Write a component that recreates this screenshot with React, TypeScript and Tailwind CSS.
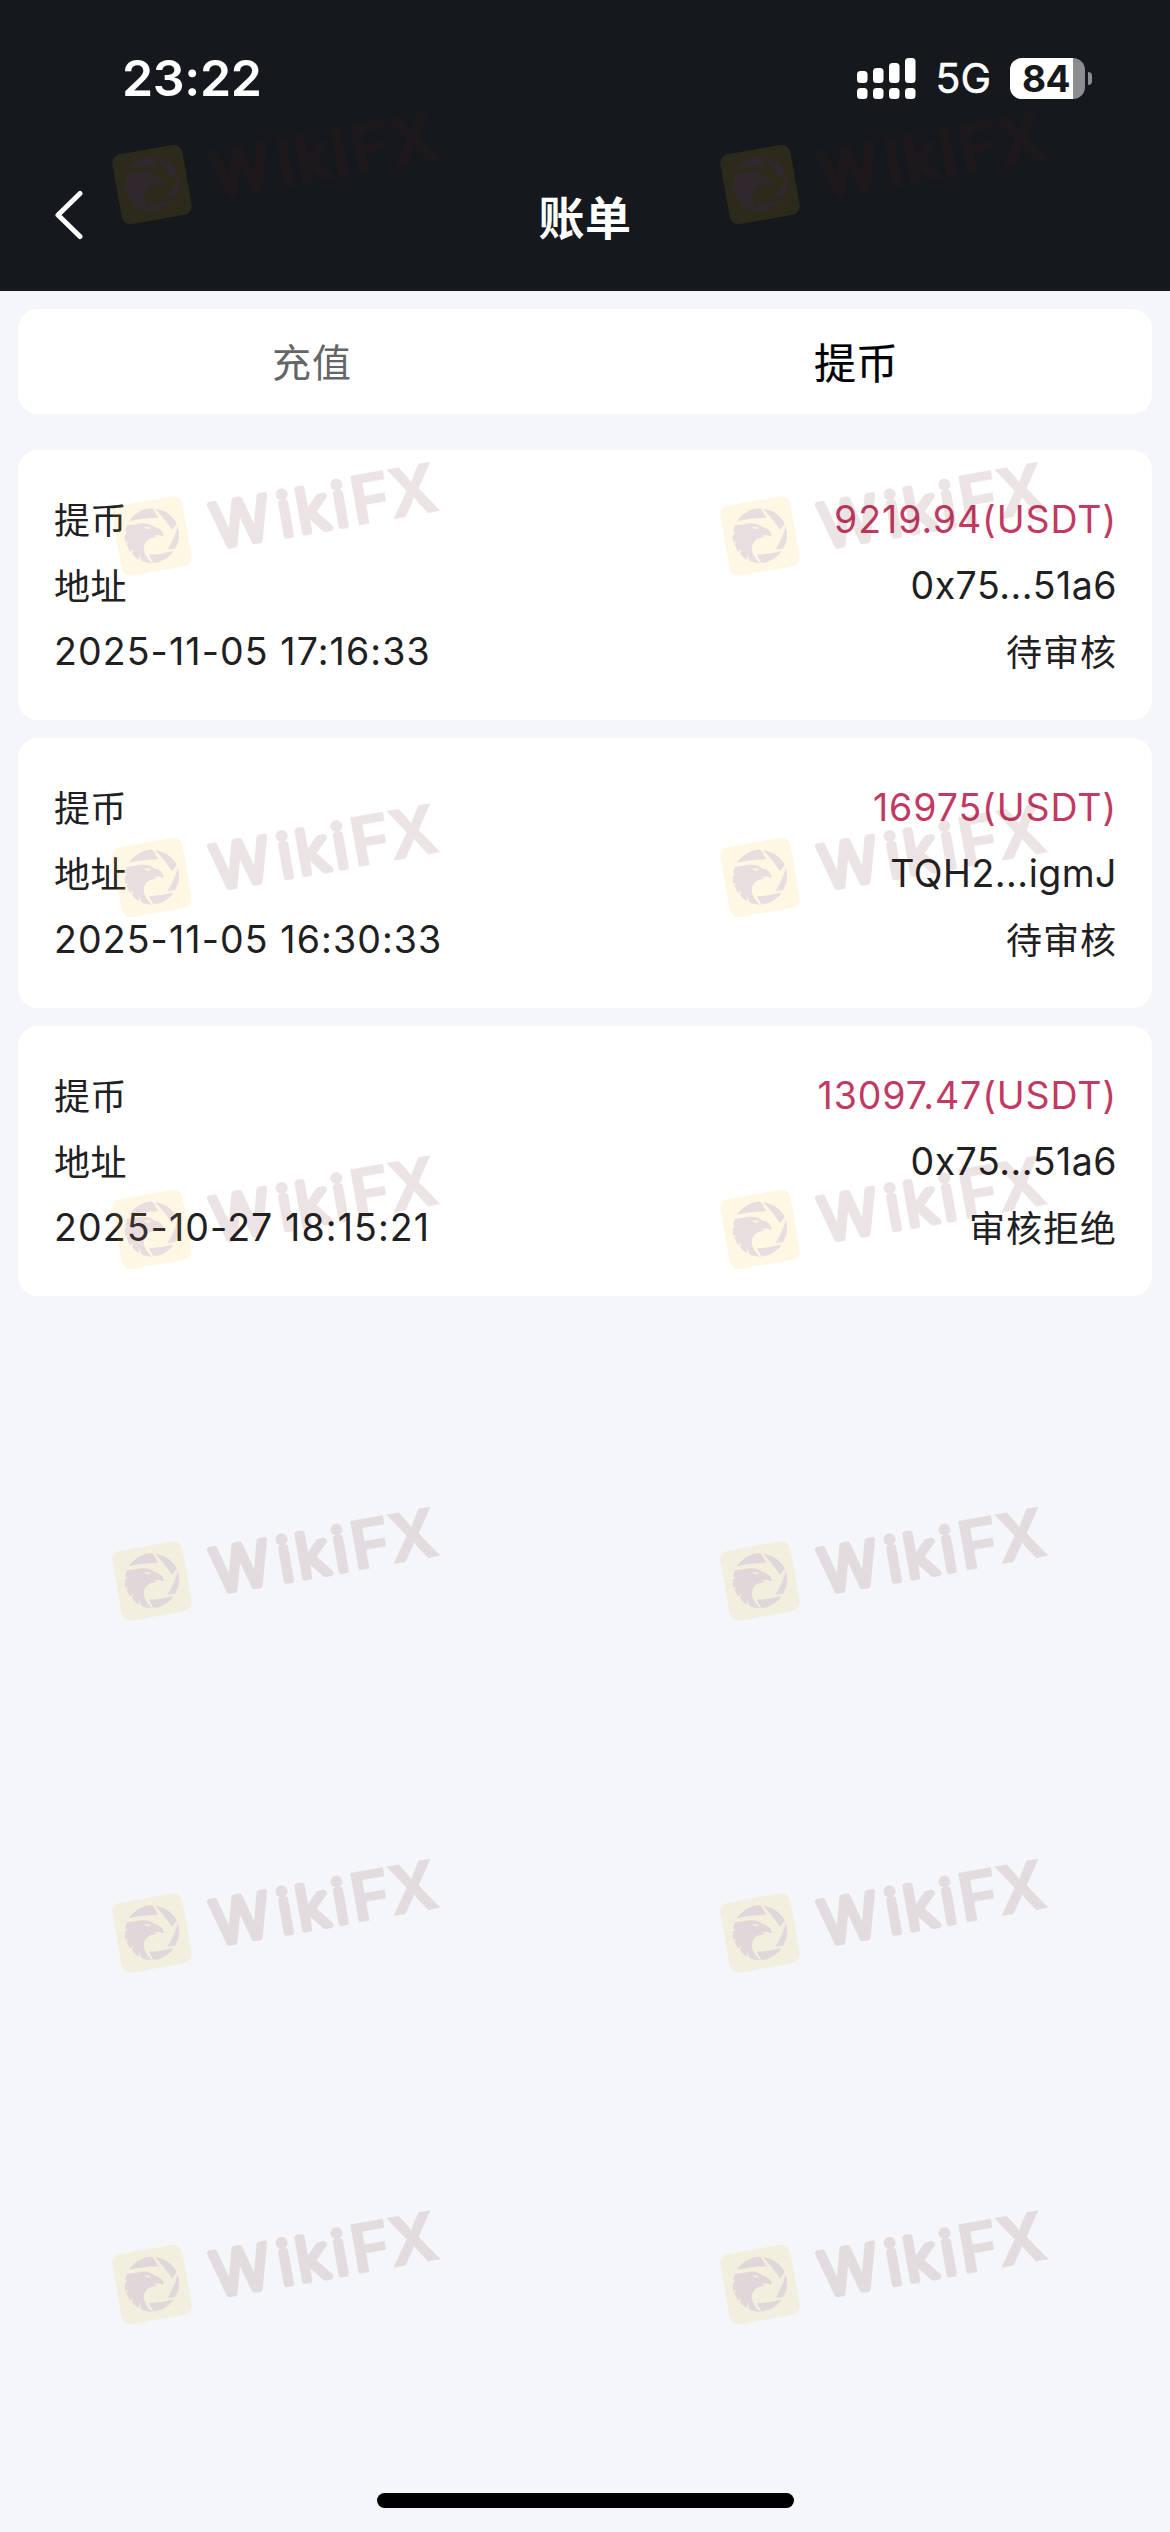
import { useState } from "react"

interface Bill {
  id: number
  amount: string
  address: string
  time: string
  status: string
}

const bills: Bill[] = [
  { id: 1, amount: "9219.94(USDT)", address: "0x75...51a6", time: "2025-11-05 17:16:33", status: "待审核" },
  { id: 2, amount: "16975(USDT)", address: "TQH2...igmJ", time: "2025-11-05 16:30:33", status: "待审核" },
  { id: 3, amount: "13097.47(USDT)", address: "0x75...51a6", time: "2025-10-27 18:15:21", status: "审核拒绝" },
]

const tabs = ["充值", "提币"]

const markRows = [184.5, 536, 877.5, 1229.5, 1581, 1933, 2284.5]
const markCols = [152, 760]

function SignalIcon() {
  return (
    <svg className="h-[41px] w-[60px]" viewBox="0 0 60 41" fill="#fff">
      <rect x="0" y="13" width="10.5" height="12" rx="3.5" />
      <rect x="16" y="10" width="10.5" height="15" rx="3.5" />
      <rect x="32" y="5" width="10.5" height="20" rx="3.5" />
      <rect x="48" y="0" width="10.5" height="25" rx="3.5" />
      <rect x="0" y="30" width="10.5" height="11" rx="3.5" />
      <rect x="16" y="30" width="10.5" height="11" rx="3.5" />
      <rect x="32" y="30" width="10.5" height="11" rx="3.5" />
      <rect x="48" y="30" width="10.5" height="11" rx="3.5" />
    </svg>
  )
}

function Battery() {
  return (
    <div className="flex items-center gap-[3px]">
      <div className="flex h-[41px] w-[75px] items-center rounded-[12px] bg-[#8b8d91]">
        <div className="flex h-full w-[63px] items-center rounded-l-[12px] bg-white pl-[12px] text-[37px] font-bold leading-none tracking-[-0.5px] text-[#15191e]">
          84
        </div>
      </div>
      <div className="h-[13px] w-[4px] rounded-r-full bg-[#8b8d91]" />
    </div>
  )
}

function StatusBar() {
  return (
    <div className="flex h-[156px] items-center justify-between pl-[122px] pr-[78px]">
      <span className="text-[50px] font-semibold leading-none tracking-[-0.3px]">23:22</span>
      <div className="flex items-center">
        <SignalIcon />
        <span className="ml-[18px] mr-[19px] text-[41px] leading-none [-webkit-text-stroke:0.5px_#fff]">5G</span>
        <Battery />
      </div>
    </div>
  )
}

function Mark() {
  return (
    <>
      <rect x="-35.500" y="-35.500" width="71" height="71" rx="9" fill="#f0b400" opacity="0.11" />
      <g opacity="0.11" fill="#5020c0" transform="rotate(10) scale(0.3333) translate(-156 -183)">
        {/* shutter blades around the eagle */}
        <path d="M87 139 A82 82 0 0 1 158 100 L175 128 Q130 128 87 139Z" />
        <path d="M164 101 A82 82 0 0 1 230 146 L216 164 Q193 128 164 101Z" />
        <path d="M233 153 A82 82 0 0 1 225 221 L203 223 Q224 190 233 153Z" />
        <path d="M147 239 Q186 238 221 228 A82 82 0 0 1 160 264Z" />
        <path
          fillRule="evenodd"
          d="M81 151 Q104 149 124 145 Q150 143 162 156 Q184 158 192 180 L187 184 Q176 177 161 182 L170 187 Q150 188 140 198 Q129 210 132 227 Q137 247 157 265 Q136 264 124 257 L118 236 L117 254 Q102 246 97 237 L99 222 L90 230 Q83 219 80 208 L86 198 L76 203 Q73 190 75 180 L82 172 L76 171 Q77 160 81 151Z M132 157 Q142 166 154 159 Q144 154 132 157Z"
        />
      </g>
      <g
        opacity="0.11"
        fill="#5c1814"
        stroke="#5c1814"
        strokeLinejoin="round"
        fontFamily='Inter, "Liberation Sans", sans-serif'
      >
        <text x="61 128 146.500 183.500" y="23" fontSize="60" fontWeight="300" strokeWidth="6.300">
          Wiki
        </text>
        <text x="201.500 239.500" y="25" fontSize="68" fontWeight="700" strokeWidth="0.500">
          FX
        </text>
      </g>
    </>
  )
}

function Watermark() {
  return (
    <svg className="pointer-events-none absolute inset-0 h-[2532px] w-[1170px]" viewBox="0 0 1170 2532">
      {markRows.map((y) =>
        markCols.map((x) => (
          <g key={`${x}-${y}`} transform={`translate(${x} ${y}) rotate(-10)`}>
            <Mark />
          </g>
        ))
      )}
    </svg>
  )
}

function BillCard({ bill }: { bill: Bill }) {
  return (
    <div className="flex h-[270px] flex-col justify-center rounded-[20px] bg-white pl-[36px] pr-[35px] pt-[2px] text-[37.5px] leading-[66px] tracking-[1.1px] text-[#1f2021]">
      <div className="flex justify-between">
        <span className="pt-[2px] text-[36px] leading-[64px] tracking-[0.5px]">提币</span>
        <span className="tracking-[0.9px] text-[#c23a63]">{bill.amount}</span>
      </div>
      <div className="flex justify-between">
        <span className="pt-[2px] text-[36px] leading-[64px] tracking-[0.5px]">地址</span>
        <span className="tracking-[0.5px]">{bill.address}</span>
      </div>
      <div className="flex justify-between">
        <span>{bill.time}</span>
        <span className="pt-[2px] text-[36px] leading-[64px] tracking-[1px]">{bill.status}</span>
      </div>
    </div>
  )
}

export default function App() {
  const [active, setActive] = useState("提币")

  return (
    <div className="relative flex h-[2532px] w-[1170px] flex-col overflow-hidden bg-[#f4f6fa] font-[Inter,'Noto_Sans_CJK_SC',sans-serif]">
      <header className="h-[291px] bg-[#15191e] text-white">
        <StatusBar />
        <div className="flex h-[118px] items-center justify-between px-[54px]">
          <svg className="h-[50px] w-[30px]" viewBox="0 0 30 50" fill="none" stroke="#fff" strokeWidth="5" strokeLinecap="round" strokeLinejoin="round">
            <path d="M26 3.500 L4 25 L26 46.500" />
          </svg>
          <h1 className="pt-[5px] text-[46px] font-bold leading-none tracking-[0.5px]">账单</h1>
          <div className="w-[30px]" />
        </div>
      </header>

      <main className="flex flex-1 flex-col px-[18px] pt-[18px]">
        <div className="mb-[36px] flex h-[105px] rounded-[20px] bg-white pl-[22px] pr-[24px] pt-[3px]">
          {tabs.map((tab) => (
            <button
              key={tab}
              onClick={() => setActive(tab)}
              className={
                tab === active
                  ? "flex-1 text-[42px] text-black [-webkit-text-stroke:0.2px_#000]"
                  : "flex-1 text-[39px] tracking-[1px] text-[#646566]"
              }
            >
              {tab}
            </button>
          ))}
        </div>

        <div className="flex flex-col gap-[18px]">
          {bills.map((bill) => (
            <BillCard key={bill.id} bill={bill} />
          ))}
        </div>
      </main>

      <div className="mx-auto mb-[24px] h-[15px] w-[417px] rounded-full bg-black" />
      <Watermark />
    </div>
  )
}
